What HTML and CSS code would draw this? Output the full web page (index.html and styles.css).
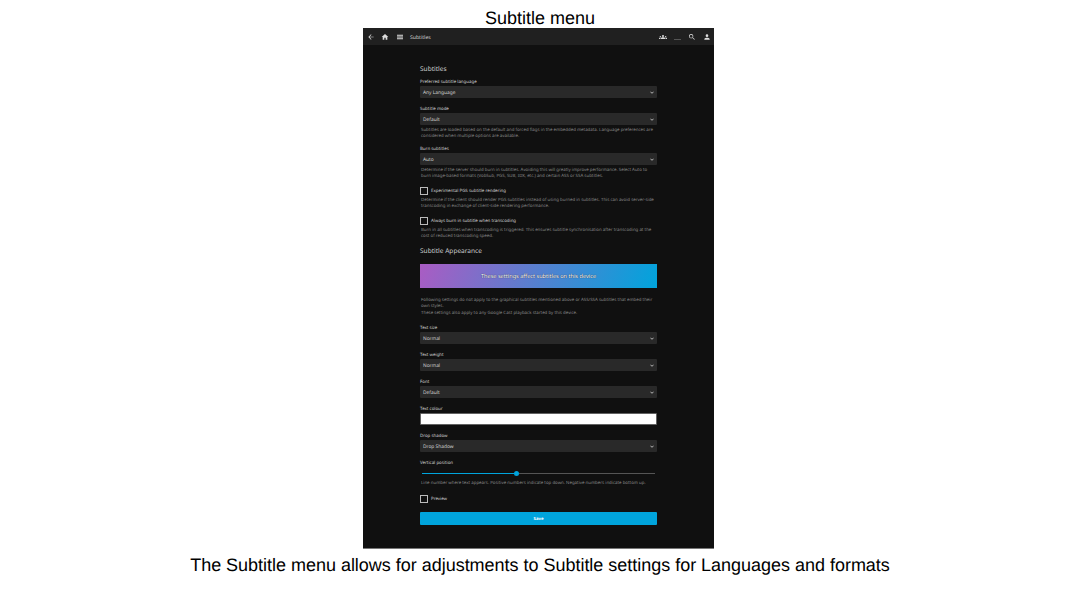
FILE: index.html
```html
<!DOCTYPE html>
<html lang="en">
<head>
<meta charset="utf-8">
<title>Subtitle menu</title>
<link rel="stylesheet" href="styles.css">
</head>
<body>
<h1 class="slide-title"><span>Subtitle menu</span></h1>
<main class="panel">
  <header class="bar">
    <svg class="icon" viewBox="0 0 24 24"><path d="M20 11H7.8l5.6-5.6L12 4l-8 8 8 8 1.400-1.400L7.800 13H20z"/></svg>
    <svg class="icon" viewBox="0 0 24 24"><path d="M10 20v-6h4v6h5v-8h3L12 3 2 12h3v8z"/></svg>
    <svg class="icon" viewBox="0 0 24 24"><path d="M3 19h18v-3H3zm0-5.500h18v-3H3zM3 5v3h18V5z"/></svg>
    <span class="bar-title">Subtitles</span>
    <svg class="icon" viewBox="0 0 24 24"><path d="M12 12.75c1.63 0 3.07.39 4.24.9 1.08.48 1.76 1.56 1.76 2.73V18H6v-1.61c0-1.18.68-2.26 1.76-2.73 1.17-.52 2.61-.91 4.24-.91zM4 13a2 2 0 1 0 0-4 2 2 0 0 0 0 4zm1.13 1.1A7 7 0 0 0 4 14c-.99 0-1.93.21-2.78.58A2.01 2.01 0 0 0 0 16.43V18h4.5v-1.61c0-.83.23-1.61.63-2.29zM20 13a2 2 0 1 0 0-4 2 2 0 0 0 0 4zm4 3.43c0-.81-.48-1.53-1.22-1.85a6.95 6.95 0 0 0-3.91-.48c.4.68.63 1.46.63 2.29V18H24zM12 6a3 3 0 1 1 0 6 3 3 0 0 1 0-6z"/></svg>
    <span class="cast"></span>
    <svg class="icon" viewBox="0 0 24 24"><path d="M15.5 14h-.8l-.3-.3A6.5 6.5 0 1 0 13.7 14.4l.3.3v.8l5 5 1.500-1.500zm-6 0a4.500 4.500 0 1 1 0-9 4.500 4.500 0 0 1 0 9z"/></svg>
    <svg class="icon" viewBox="0 0 24 24"><path d="M12 12a4 4 0 1 0 0-8 4 4 0 0 0 0 8zm0 2c-2.700 0-8 1.300-8 4v2h16v-2c0-2.700-5.300-4-8-4z"/></svg>
  </header>
  <form class="settings">
    <h2 class="heading">Subtitles</h2>
    <div class="field first"><label class="label">Preferred subtitle language</label>
      <div class="select">Any Language<svg class="chev" viewBox="0 0 10 6"><path d="M1 1l4 4 4-4"/></svg></div></div>
    <div class="field"><label class="label">Subtitle mode</label>
      <div class="select">Default<svg class="chev" viewBox="0 0 10 6"><path d="M1 1l4 4 4-4"/></svg></div>
      <p class="help">Subtitles are loaded based on the default and forced flags in the embedded metadata. Language preferences are<br>considered when multiple options are available.</p></div>
    <div class="field"><label class="label">Burn subtitles</label>
      <div class="select">Auto<svg class="chev" viewBox="0 0 10 6"><path d="M1 1l4 4 4-4"/></svg></div>
      <p class="help">Determine if the server should burn in subtitles. Avoiding this will greatly improve performance. Select Auto to<br>burn image-based formats (VobSub, PGS, SUB, IDX, etc.) and certain ASS or SSA subtitles.</p></div>
    <div class="check"><label class="check-row"><span class="box"></span>Experimental PGS subtitle rendering</label>
      <p class="help">Determine if the client should render PGS subtitles instead of using burned in subtitles. This can avoid server-side<br>transcoding in exchange of client-side rendering performance.</p></div>
    <div class="check"><label class="check-row"><span class="box"></span>Always burn in subtitle when transcoding</label>
      <p class="help">Burn in all subtitles when transcoding is triggered. This ensures subtitle synchronisation after transcoding at the<br>cost of reduced transcoding speed.</p></div>
    <h2 class="heading appearance">Subtitle Appearance</h2>
    <div class="banner">These settings affect subtitles on this device</div>
    <div class="notes">
      <p class="help">Following settings do not apply to the graphical subtitles mentioned above or ASS/SSA subtitles that embed their<br>own styles.</p>
      <p class="help">These settings also apply to any Google Cast playback started by this device.</p>
    </div>
    <div class="field"><label class="label">Text size</label>
      <div class="select">Normal<svg class="chev" viewBox="0 0 10 6"><path d="M1 1l4 4 4-4"/></svg></div></div>
    <div class="field"><label class="label">Text weight</label>
      <div class="select">Normal<svg class="chev" viewBox="0 0 10 6"><path d="M1 1l4 4 4-4"/></svg></div></div>
    <div class="field"><label class="label">Font</label>
      <div class="select">Default<svg class="chev" viewBox="0 0 10 6"><path d="M1 1l4 4 4-4"/></svg></div></div>
    <div class="field"><label class="label">Text colour</label>
      <div class="select colour"></div></div>
    <div class="field"><label class="label">Drop shadow</label>
      <div class="select">Drop Shadow<svg class="chev" viewBox="0 0 10 6"><path d="M1 1l4 4 4-4"/></svg></div></div>
    <div class="field"><label class="label">Vertical position</label>
      <div class="slider"><span class="filled"></span><span class="thumb"></span><span class="rest"></span></div>
      <p class="help">Line number where text appears. Positive numbers indicate top down. Negative numbers indicate bottom up.</p></div>
    <label class="check-row preview"><span class="box"></span>Preview</label>
    <div class="save">Save</div>
  </form>
</main>
<p class="caption"><span>The Subtitle menu allows for adjustments to Subtitle settings for Languages and formats</span></p>
</body>
</html>
```
FILE: styles.css
```css
* { box-sizing: border-box; margin: 0; padding: 0; }
body { width: 1080px; height: 608px; overflow: hidden; background: #fff; color: #000; font-family: "Liberation Sans", Arial, sans-serif; text-rendering: geometricPrecision; }
.slide-title { height: 28px; padding-top: 8px; font-size: 18px; line-height: 21px; font-weight: 400; text-align: center; letter-spacing: -.02px; }
.panel { width: 351px; height: 521px; margin-left: 363px; background: #101010; border-bottom: 1px solid #777; font-family: "Noto Sans", sans-serif; color: #d0d0d0; white-space: nowrap; }
.bar { height: 17px; display: flex; align-items: center; background: #202020; padding: 0 3.500px; gap: 6.800px; }
.icon { width: 8px; height: 8px; fill: #ddd; flex: none; }
.bar-title { flex: 1; font-size: 5.150px; line-height: 8px; margin-left: -1px; }
.cast { width: 7px; height: 1px; margin-top: 6px; background: #555; }
.settings { width: 237px; margin-left: 57px; padding-top: 20px; }
.heading { height: 8px; font-size: 6.550px; line-height: 8px; font-weight: 400; }
.field { margin-top: 7px; }
.field.first { margin-top: 5px; }
.label { display: block; height: 8px; font-size: 4.400px; line-height: 8px; }
.select { height: 12px; display: flex; align-items: center; justify-content: space-between; padding: 1px 3px 0; background: #292929; border-radius: 1px; font-size: 4.850px; }
.chev { width: 4px; height: 3px; fill: none; stroke: #ddd; stroke-width: 2; }
.colour { background: #fff; border: 1px solid #626262; }
.help { padding: 2px 0 0 1px; margin-bottom: -1px; font-size: 4.380px; line-height: 6px; color: #888; }
.check { margin-top: 8px; }
.check-row { height: 9px; display: flex; align-items: center; gap: 3px; font-size: 4.400px; }
.box { width: 8px; height: 8px; border: 1px solid #bbb; }
.appearance { margin-top: 9px; }
.banner { height: 24px; margin-top: 9px; display: flex; align-items: center; justify-content: center; background: linear-gradient(110deg, #aa5cc3, #00a4dc); font-size: 5.580px; color: #fff; text-shadow: 0 0 1px #000; }
.notes { margin-top: 7px; padding-bottom: 2px; }
.slider { height: 5px; margin: 4px 2px 2px; display: flex; align-items: center; }
.filled { width: 92px; height: 1px; background: #00a4dc; }
.thumb { width: 5px; height: 5px; border-radius: 50%; background: #00a4dc; }
.rest { flex: 1; height: 1px; background: #555; }
.preview { margin-top: 9px; }
.save { height: 13px; margin-top: 9px; display: flex; align-items: center; justify-content: center; background: #00a4dc; font-size: 4.300px; font-weight: 700; color: #fff; border-radius: 1px; }
.caption { padding-top: 5px; font-size: 18px; line-height: 22px; text-align: center; letter-spacing: -.02px; }
```
